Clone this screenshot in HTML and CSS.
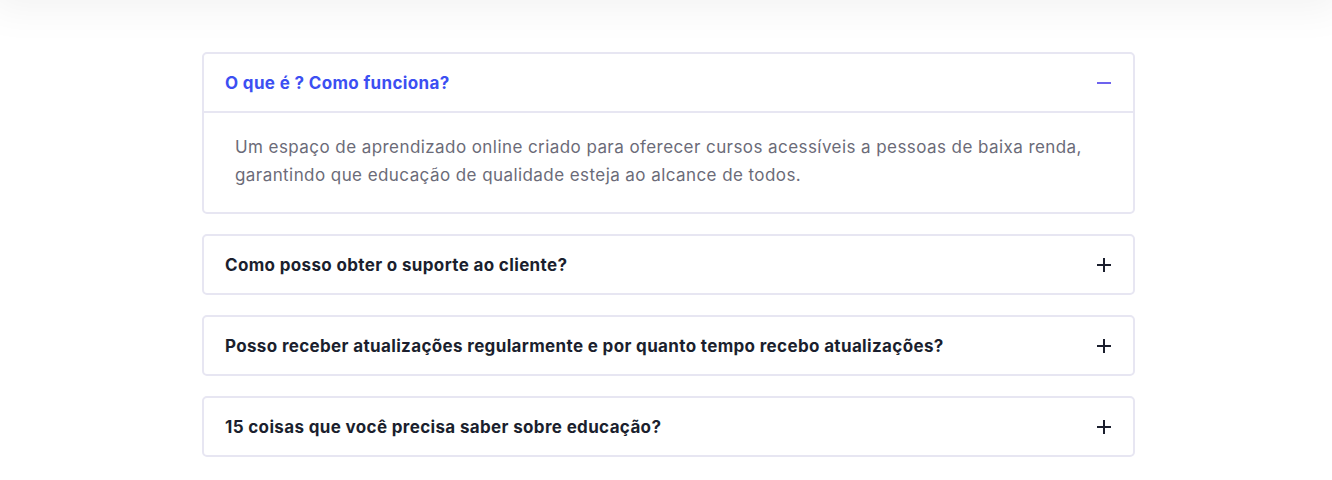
FILE: index.html
```html
<!DOCTYPE html>
<html lang="pt">
<head>
<meta charset="utf-8">
<link rel="stylesheet" href="styles.css">
</head>
<body>
<div class="topbar"></div>
<main class="faq">
  <div class="item open">
    <div class="head">
      <span class="q">O que é ? Como funciona?</span>
      <span class="icon minus"></span>
    </div>
    <div class="body">Um espaço de aprendizado online criado para oferecer cursos acessíveis a pessoas de baixa renda, garantindo que educação de qualidade esteja ao alcance de todos.</div>
  </div>
  <div class="item">
    <div class="head">
      <span class="q">Como posso obter o suporte ao cliente?</span>
      <span class="icon plus"></span>
    </div>
  </div>
  <div class="item">
    <div class="head">
      <span class="q">Posso receber atualizações regularmente e por quanto tempo recebo atualizações?</span>
      <span class="icon plus"></span>
    </div>
  </div>
  <div class="item">
    <div class="head">
      <span class="q">15 coisas que você precisa saber sobre educação?</span>
      <span class="icon plus"></span>
    </div>
  </div>
</main>
</body>
</html>
```
FILE: styles.css
```css
* { box-sizing: border-box; }
html, body { margin: 0; padding: 0; background: #fff; }
body { font-family: "Inter", "Liberation Sans", sans-serif; overflow: hidden; }
.topbar {
  position: absolute; left: 0; right: 0; top: -60px; height: 60px;
  background: #f4f4f4;
  box-shadow: 0 0 40px 10px rgba(0,0,0,0.05);
}
.faq {
  width: 933px;
  margin: 52px 0 0 202px;
  display: flex; flex-direction: column; gap: 20px;
}
.item {
  border: 2px solid #e7e6f2;
  border-radius: 5px;
  background: #fff;
}
.head {
  height: 57px;
  display: flex; align-items: center; justify-content: space-between;
  padding: 0 22px 0 21px;
}
.q {
  font-size: 17px; font-weight: 700; color: #1b1f2e; letter-spacing: 0.35px;
}
.open .head { border-bottom: 2px solid #e7e6f2; height: 59px; }
.open .q { color: #3c4ff2; }
.body {
  padding: 20px 30px 23px 31px;
  font-size: 17px; line-height: 28px; color: #6b6b78; letter-spacing: 0.43px;
}
.icon { position: relative; width: 14px; height: 14px; }
.icon::before, .icon::after {
  content: ""; position: absolute; background: #1b1f2e;
}
.icon::before { left: 0; right: 0; top: 6px; height: 2px; }
.plus::after { top: 0; bottom: 0; left: 6px; width: 2px; }
.minus::before { background: #6d63ee; }
```
